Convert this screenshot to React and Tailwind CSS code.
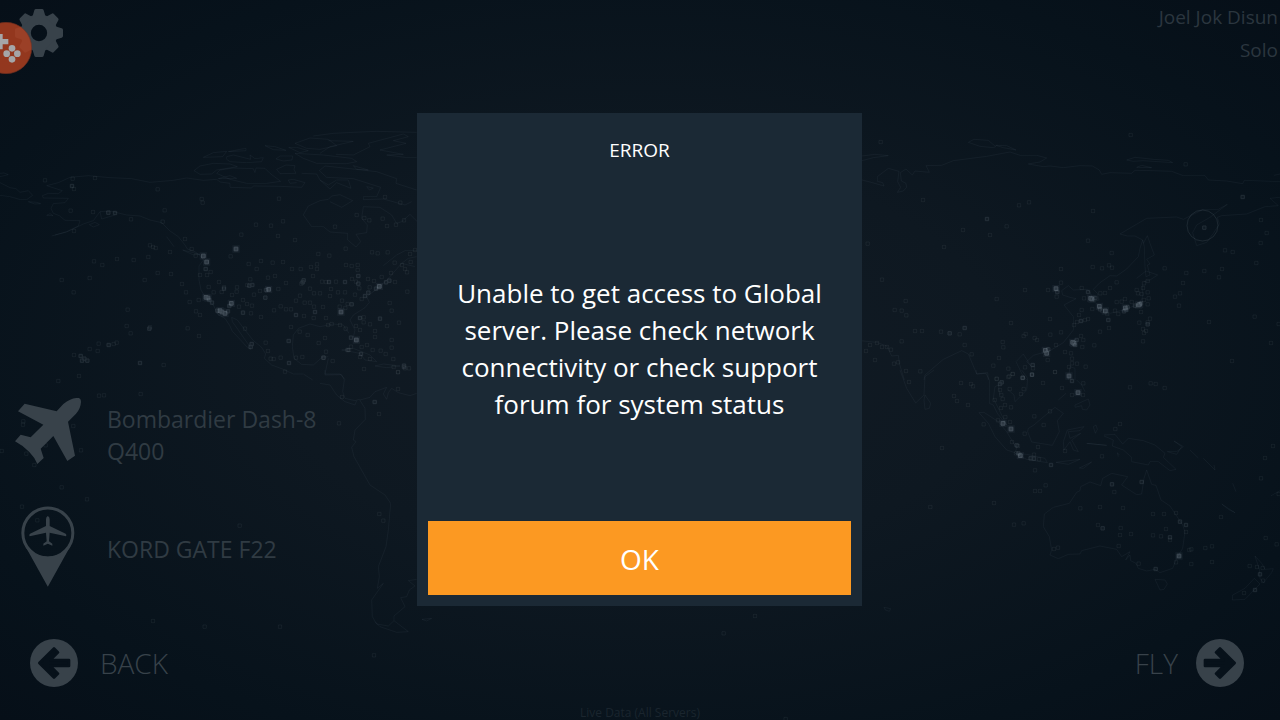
import React from 'react';

// Each region keeps its own origin; coordinates inside are in thirds of a map unit.
const regions = [
  {
    id: 'north-america',
    origin: 'translate(0 100) scale(0.33333)',
    coast: [
      'M0 220 L12 219 25 224 0 230 M0 248 L30 263 48 266 60 277 85 272 98 286 80 299 62 299 30 290 0 286',
      'M85 305 L110 307 122 311 104 312Z',
      'M165 405 L200 395 235 378 240 362 195 361 178 347 160 340 153 325 160 311 195 308 205 295 130 294 127 287 145 280 175 281 187 272 140 257 175 248 210 232 265 227 330 233 395 236 450 247 520 241 560 234 610 241 650 238 660 246 690 250 690 262 755 264 760 258 840 259 905 262 915 248 880 238 865 240 870 250 890 248',
      'M155 408 L200 396 250 372 280 362 300 335 330 333 380 345 420 348 450 360 485 368 510 393 535 410 555 435 562 447 585 455 600 466 M305 357 L300 335 M305 357 L345 345',
      'M500 410 L522 440 M548 450 L600 463 580 465Z M268 374 L285 367 298 374 280 381Z M140 346 L150 341 159 347Z',
      'M600 466 L610 480 597 498 597 540 603 570 615 590 640 615 655 645 675 655 690 678 697 694 720 718 740 740 752 748 750 740 730 712 715 690 697 665 695 652 712 660 735 690 760 722 785 742 797 762 793 775 815 795 850 808 880 822 910 822 938 840',
      'M1068 441 L1043 420 1043 400 990 396 970 380 935 380 910 345 925 318 960 302 985 298 995 288 1020 284 1058 302 1025 322 990 305',
      'M1068 441 L1082 425 1068 403 1100 398 1102 375 1085 355 1090 320 1140 322 1175 345 1190 370 1205 365 1230 343 1252 365',
      'M582 212 L600 198 640 190 690 192 712 200 650 210 635 222 600 223Z M660 210 L700 204 760 206 765 218 768 204 795 205 810 220 842 244 800 250 740 250 690 238 650 220Z M655 236 L690 227 710 235Z',
      'M610 172 L640 158 680 154 668 170Z M680 170 L700 165 752 178 750 165 765 176 790 173 785 185 740 188 690 185 680 178Z M685 155 L720 148 738 145 738 152Z M795 137 L825 140 858 151 820 149Z',
      'M828 177 L840 168 878 168 876 180 850 183Z M830 208 L858 195 885 197 882 208 888 220 840 221Z M866 142 L890 142 925 152 900 158Z M885 160 L970 165 1055 175 1070 185 1040 191 950 190 910 175Z',
      'M940 108 L1000 100 1060 97 1130 94 1250 97 M885 130 L930 114 985 118 1010 137 960 148 920 145Z M960 160 L990 140 1060 124 985 122 M1008 163 L1060 165 1110 140 1105 130 1210 102 1225 110 1180 122 1218 130 1140 150 1210 163 1160 165 1215 172 1250 172',
      'M958 212 L975 198 1050 206 1130 215 1190 236 1188 250 1250 270 M958 212 L980 232 1060 236 1142 262 1130 290 1090 290 1090 299 1150 297 1215 315 1235 305 M905 220 L950 222 960 240 985 255 1010 240 1045 240 1053 265 1010 248 990 267 960 240 M1100 260 L1120 264 1108 270Z M1060 197 L1105 210 1070 208Z',
      'M1250 452 L1215 452 1190 465 1150 497 M1250 470 L1225 475 1205 490 1245 500 M1205 490 L1170 530 1140 560 1100 590 1108 607 1095 623 1060 645 1050 660 1065 690 1060 712 M1047 700 L1030 675 1000 672 960 680 930 672 895 685 880 705 877 740 882 775 905 793 940 795 965 773 985 770 M985 775 L975 822 1020 822 1035 838',
      'M1025 750 L1060 745 1110 765 1130 785 1095 780 1080 760Z M1125 798 L1150 792 1200 798 1160 803Z',
    ],
    faint: [
      135, 241, 218, 236, 222, 267, 285, 234, 473, 268, 212, 332, 279, 336, 393, 358, 222, 393, 494, 331, 488, 365, 605, 297, 608, 308, 837, 296, 849, 364, 768, 374, 813, 377,
      724, 404, 834, 408, 885, 420, 555, 417, 575, 447, 587, 467, 450, 436, 459, 441, 467, 444, 510, 456, 445, 471, 401, 480, 351, 477, 307, 495, 282, 484, 269, 534, 185, 540,
      221, 577, 434, 540, 473, 519, 513, 522, 546, 552, 558, 577, 569, 606, 596, 600, 588, 634, 600, 645, 563, 685, 597, 708, 383, 629, 380, 678, 392, 700, 450, 682, 350, 728,
      341, 732, 296, 731, 293, 753, 269, 747, 222, 765, 491, 795, 237, 828, 1005, 380, 1070, 345, 1093, 354, 1108, 361, 1148, 356, 1161, 378, 1188, 374, 1212, 361, 1155, 291,
      1201, 308, 1037, 446, 955, 462, 988, 467, 1116, 457, 1133, 460, 1163, 457, 692, 469, 746, 492, 783, 483, 818, 488, 849, 486, 770, 507, 804, 533, 825, 528, 600, 525,
      621, 525, 632, 516, 626, 561, 657, 546, 672, 562, 641, 577, 665, 576, 696, 585, 710, 575, 711, 562, 751, 538, 742, 555, 762, 584, 780, 573, 835, 567, 858, 549, 876, 507,
      902, 507, 933, 501, 951, 493, 951, 507, 939, 528, 904, 551, 930, 566, 942, 580, 966, 545, 978, 546, 993, 567, 960, 580, 990, 588, 1008, 545, 1014, 577, 900, 587, 888, 602,
      914, 608, 930, 608, 942, 620, 969, 621, 912, 648, 858, 628, 873, 628, 842, 619, 822, 631, 783, 651, 753, 640, 717, 620, 729, 600, 741, 612, 756, 617, 735, 686, 797, 728,
      804, 753, 812, 776, 821, 777, 842, 773, 855, 815, 888, 773, 907, 771, 873, 681, 899, 695, 923, 705, 941, 654, 978, 654, 1038, 495, 1055, 498, 1073, 495, 1073, 510,
      1056, 537, 1068, 545, 1078, 565, 1104, 537, 1109, 562, 1122, 543, 1145, 531, 1173, 519, 1184, 488, 1206, 495, 1215, 507, 1230, 462, 1245, 450, 1232, 486, 1221, 517,
      1185, 546, 1222, 575, 1169, 609, 1175, 632, 1197, 668, 1161, 678, 1125, 693, 1110, 673, 1091, 652, 1091, 667, 1068, 678, 1080, 690, 1037, 686, 1019, 620, 1036, 624,
      1043, 612, 1085, 597, 1065, 584, 1035, 577, 1026, 602, 1125, 711, 1175, 720, 1175, 743, 1142, 752, 1118, 750, 1101, 735, 1085, 741, 1080, 771, 1110, 777, 1157, 762,
      1180, 777, 1181, 801, 1194, 817, 1215, 805, 1227, 805, 1092, 807, 1053, 740, 1047, 750, 978, 755, 998, 783, 972, 773, 956, 729, 975, 714, 995, 672, 984, 675, 1020, 675,
    ],
    mid: [
      216, 258, 345, 339, 325, 338, 420, 789, 448, 686, 242, 768, 253, 776, 262, 782, 246, 782, 326, 735, 617, 507, 672, 566, 757, 555, 748, 557, 796, 593, 798, 570, 911, 541,
      908, 547, 987, 546, 1035, 546, 1075, 528, 1075, 551, 945, 636, 888, 645, 729, 638, 755, 732, 752, 741, 867, 789, 866, 723, 970, 773, 1043, 750, 1083, 762, 1140, 656,
      1080, 654, 1055, 613, 1128, 566, 1105, 578, 1095, 588, 1158, 547, 1168, 542, 1053, 713, 1212, 797, 1212, 801, 628, 600, 636, 608, 652, 632, 684, 634, 688, 618,
    ],
    bright: [610, 468, 620, 486, 708, 447, 618, 592, 624, 594, 660, 632, 666, 636, 675, 640, 694, 610, 806, 568, 1023, 636, 1138, 559, 1069, 720],
  },
  {
    id: 'asia',
    origin: 'translate(860 100) scale(0.33333)',
    coast: [
      'M6 168 L45 163 85 167 40 173 6 182 M6 240 L30 246 72 258 68 248 52 244 52 230 85 205 117 214 113 245 122 262 112 277 130 273 140 262 138 250 124 243 121 218 138 207 157 225 165 213 208 217 198 197 245 196 280 182 380 169 450 156 480 166 530 166 560 174 540 186 505 192 550 200 570 198 610 203 660 197 697 198 718 210 725 223 750 218 815 220 825 211 880 212 935 214 970 227 1035 227 1045 240 1100 243 1148 251 1153 241 1260 245',
      'M325 127 L342 118 385 121 407 140 400 143 360 139Z M407 136 L440 137 468 150 430 143Z M800 180 L825 172 880 178 925 181 938 188 850 182 820 184Z M830 202 L845 196 875 203Z M1242 226 L1260 222',
      'M1260 292 L1230 295 1255 317 1215 320 1160 342 1085 347 1072 352 1078 372 1060 400 1040 427 1010 437 998 398 1010 375 1050 352 1102 313 1075 328 1030 328 970 358 950 351 860 355 780 402 802 408 825 408 848 420 840 445 835 470 800 507 770 528 750 527 720 548 700 568 712 580 717 600 700 605 690 575 680 568 640 570 625 557 605 572 608 585 630 592 648 596 612 615 640 650 640 690 610 728 570 752 520 766 500 785 512 797 490 762 468 785 485 820 500 840',
      'M848 420 L853 440 855 500 858 530 870 525 862 495 870 492 860 478 883 465 870 430 862 407 850 430 M830 535 L858 513 893 525 870 540 852 545 M848 555 L848 590 838 612 790 630 750 640',
      'M0 722 L50 727 80 738 95 768 115 766 118 790 133 840 M192 840 L195 825 250 778 305 752 325 762 350 822 383 818 385 840 M625 840 L630 800 645 805 645 840',
    ],
    faint: [
      62, 126, 812, 105, 977, 193, 189, 300, 477, 316, 507, 307, 699, 333, 440, 379, 309, 390, 390, 405, 252, 441, 23, 431, 684, 422, 755, 459, 1203, 360, 1220, 399, 1202, 429,
      1095, 451, 1118, 456, 1189, 489, 1086, 507, 1077, 532, 1033, 513, 979, 519, 914, 505, 969, 549, 960, 580, 945, 590, 957, 617, 1047, 666, 1184, 650, 1233, 729, 1116, 783,
      1256, 672, 603, 507, 603, 548, 564, 570, 495, 570, 410, 597, 66, 539, 137, 603, 104, 630, 125, 632, 139, 646, 453, 669, 570, 657, 165, 693, 186, 693, 243, 695, 299, 703,
      314, 735, 335, 763, 417, 774, 400, 797, 428, 726, 430, 742, 491, 708, 497, 702, 524, 714, 531, 720, 571, 704, 603, 697, 642, 675, 651, 666, 657, 645, 665, 630, 675, 660,
      684, 657, 697, 627, 672, 595, 665, 564, 698, 501, 726, 505, 747, 496, 756, 503, 770, 547, 750, 564, 735, 579, 721, 580, 770, 606, 785, 605, 795, 597, 815, 606, 830, 570,
      834, 580, 845, 582, 849, 564, 852, 550, 863, 543, 863, 577, 866, 595, 863, 613, 852, 600, 843, 636, 870, 656, 863, 667, 838, 668, 849, 687, 858, 693, 852, 699, 849, 724,
      747, 684, 720, 695, 703, 736, 667, 741, 670, 720, 663, 708, 590, 590, 588, 735, 563, 780, 585, 816, 636, 776, 636, 790, 627, 801, 651, 791, 677, 800, 633, 760, 615, 756,
      445, 806, 458, 822, 445, 831, 410, 836, 495, 802, 519, 805, 18, 753, 30, 735, 51, 729, 66, 741, 81, 741, 93, 749, 102, 791, 114, 787, 45, 780, 125, 724, 138, 813, 181, 814,
      765, 632, 775, 642, 742, 642, 726, 632,
    ],
    mid: [381, 357, 1148, 291, 1033, 383, 314, 684, 269, 700, 592, 576, 684, 576, 706, 594, 720, 628, 745, 660, 663, 663, 863, 673, 798, 630, 803, 622, 792, 634, 650, 720, 645, 735, 565, 748, 518, 795, 516, 824, 488, 833, 825, 617, 843, 610],
    bright: [588, 566, 692, 595, 696, 597, 718, 619, 736, 633, 796, 624, 836, 615, 839, 613, 638, 727, 642, 730, 556, 751, 560, 760, 627, 828],
  },
  {
    id: 'oceania',
    origin: 'translate(860 370) scale(0.33333)',
    coast: [
      'M120 0 L140 55 167 99 192 75 195 20 222 0 M195 75 L212 100 208 115 195 118 192 90Z M348 0 L350 12 378 10 388 30 388 100 400 105 412 130 440 165 425 135 410 105 400 85 405 50 415 45 420 75 M485 0 L503 25 500 60 465 95 462 75 445 60',
      'M357 128 L372 127 415 155 440 185 470 235 465 248 440 240 405 200 385 160Z M465 250 L500 253 555 265 562 278 500 268Z M588 277 L660 268 625 283Z M658 294 L695 276 670 295Z',
      'M505 175 L522 165 545 145 585 112 610 130 592 152 598 185 577 226 515 216 503 185Z M595 90 L618 70 M645 105 L685 87 690 105 680 120 667 118 665 107 645 112Z M650 30 L665 45 675 65',
      'M612 240 L610 215 622 180 672 170 660 182 625 185 630 205 662 190 635 210 655 245 640 240 630 215Z M700 170 L708 165 712 178 706 190Z M680 220 L740 226 700 222Z',
      'M732 195 L765 193 788 222 805 205 850 212 885 225 915 250 910 262 948 298 930 302 895 275 870 275 865 285 815 275 815 262 790 240 757 228 760 210 732 198 M922 245 L950 245 970 230 942 213 965 230 950 253Z M990 240 L1015 264 M1030 265 L1065 300 1062 285 M1118 340 L1128 365 M1085 402 L1125 428 1105 418Z M1232 378 L1260 362 M775 260 L772 248 778 255',
      'M860 300 L875 343 888 346 903 390 930 408 948 435 968 465 975 485 968 535 950 565 938 595 900 608 885 598 860 603 835 595 828 580 812 572 810 555 797 570 810 545 785 560 770 538 720 528 665 542 660 552 625 553 595 566 570 555 575 540 568 500 550 470 553 432 580 412 628 400 650 367 660 362 662 350 690 336 722 347 728 325 755 310 803 320 785 345 830 374 845 372 852 325Z',
      'M885 628 L915 630 922 642 912 658 900 660Z M1185 558 L1205 580 1215 598 1240 596 1235 608 1210 638 1200 625 1198 598Z M1183 625 L1200 642 1155 688 1117 690 1118 675 1155 655Z M72 712 L92 716 88 724 76 720Z',
    ],
    faint: [
      147, 36, 303, 39, 333, 42, 339, 49, 282, 78, 291, 93, 324, 105, 410, 27, 448, 19, 458, 12, 449, 57, 420, 60, 424, 75, 428, 87, 404, 90, 423, 114, 435, 105, 453, 112,
      483, 72, 491, 57, 549, 39, 606, 54, 636, 75, 669, 75, 570, 124, 523, 139, 551, 165, 494, 191, 436, 141, 414, 151, 450, 156, 371, 163, 246, 234, 456, 216, 474, 228,
      468, 250, 534, 231, 522, 254, 537, 268, 525, 301, 557, 346, 525, 363, 540, 363, 402, 399, 211, 411, 462, 464, 491, 460, 615, 243, 726, 259, 780, 162, 766, 177, 810, 52,
      872, 40, 887, 42, 914, 54, 1239, 228, 1215, 264, 1203, 325, 1083, 441, 1217, 504, 1250, 523, 1056, 529, 1036, 534, 994, 538, 988, 540, 994, 582, 1056, 576, 720, 411,
      661, 415, 789, 414, 763, 366, 879, 432, 912, 432, 948, 429, 918, 477, 903, 499, 879, 496, 930, 510, 978, 486, 813, 492, 780, 495, 782, 474, 714, 465, 776, 528, 836, 581,
      948, 577, 582, 537, 594, 533, 1169, 588, 1191, 591, 1208, 594, 1152, 669, 1209, 632, 1256, 372, 670, 40, 585, 6,
    ],
    mid: [420, 42, 425, 37, 488, 24, 516, 14, 522, 266, 512, 265, 573, 285, 756, 343, 845, 336, 728, 475, 930, 502, 960, 455, 978, 465, 887, 597, 1185, 660, 636, 33, 1200, 613, 470, 226, 475, 250],
    bright: [429, 160, 453, 177, 481, 257, 654, 68, 957, 558],
  },
  {
    id: 'south-america',
    origin: 'translate(320 370) scale(0.33333)',
    coast: [
      'M15 0 L15 15 65 14 73 30 68 65 75 85 105 92 118 88 135 115 136 148 105 180 100 210 108 215 95 232 102 260 150 345 195 375 212 400 205 480 198 530 175 590 178 620 172 655 190 640 155 690 157 740 170 762 205 768 222 752 265 785 230 787 180 770 165 755 M222 752 L222 738 255 710 242 683 260 680 268 660 285 648 265 632 290 628',
      'M0 40 L30 45 50 75 75 95 105 105 110 92 M120 90 L150 82 165 65 200 52 190 72 200 88 205 68 215 55 235 68 270 77 290 70 M306 748 L335 745 320 753Z',
    ],
    faint: [234, 6, 234, 57, 66, 81, 177, 132, 57, 160, 178, 432, 190, 452],
    mid: [164, 96],
    bright: [],
  },
  {
    id: 'pacific',
    origin: 'translate(0 380) scale(0.33333)',
    coast: [],
    faint: [
      175, 3, 297, 47, 312, 46, 422, 42, 5, 213, 70, 124, 69, 134, 220, 138, 243, 211, 79, 221, 103, 255, 137, 196, 185, 322, 261, 358, 66, 380, 112, 421, 719, 437, 459, 723,
      614, 740, 840, 740, 1122, 826, 2265, 708, 2171, 760, 2357, 1017,
    ],
    mid: [],
    bright: [],
  },
];

// Turns a flat x, y list into one path of small squares.
const squares = (points, size) => {
  let d = '';
  for (let i = 0; i < points.length; i += 2) {
    d += `M${points[i] - size / 2} ${points[i + 1] - size / 2}h${size}v${size}h${-size}z`;
  }
  return d;
};

const WorldMap = () => (
  <svg
    className="absolute inset-0 h-full w-full"
    viewBox="0 0 1280 720"
    preserveAspectRatio="xMidYMid slice"
    fill="none"
    stroke="#c8d8e4"
    aria-hidden="true"
  >
    {regions.map((region) => (
      <g key={region.id} transform={region.origin} strokeWidth="3">
        <path d={region.coast.join(' ')} opacity="0.05" />
        <path d={squares(region.faint, 10)} opacity="0.065" />
        <path d={squares(region.mid, 10)} fill="#c8d8e4" fillOpacity="0.3" opacity="0.12" />
        <path d={squares(region.bright, 22)} fill="#c8d8e4" stroke="none" opacity="0.05" />
        <path d={squares(region.bright, 11)} fill="#c8d8e4" fillOpacity="0.6" opacity="0.24" />
      </g>
    ))}
    <circle cx="1202.5" cy="225.5" r="15.5" opacity="0.1" />
  </svg>
);

const GearIcon = () => (
  <svg className="h-12 w-12" viewBox="-72 -72 144 144" fill="currentColor" aria-hidden="true">
    <circle r="40" fill="none" stroke="currentColor" strokeWidth="31" />
    {[0, 45, 90, 135, 180, 225, 270, 315].map((angle) => (
      <path
        key={angle}
        transform={`rotate(${angle})`}
        d="M-20 -48 L-14 -68 Q-13 -72 -9 -72 H9 Q13 -72 14 -68 L20 -48Z"
      />
    ))}
  </svg>
);

const PlaneIcon = () => (
  <svg className="h-[66px] w-[66px]" viewBox="45 54 198 198" fill="currentColor" aria-hidden="true">
    <path d="M170 94 L190 72 Q216 52 236 54 Q243 56 243 66 Q242 86 228 101 L204 125 L225 227 L202 243 L160 168 L122 206 L131 234 L112 252 Q104 232 88 216 Q68 196 45 184 L62 164 L92 172 L130 134 L54 94 L74 71 Z" />
  </svg>
);

const GatePinIcon = () => (
  <svg className="h-[81px] w-[54px]" viewBox="65 377 162 243" fill="currentColor" aria-hidden="true">
    <circle cx="145.5" cy="458" r="75" fill="none" stroke="currentColor" strokeWidth="9" />
    <path d="M76 494 Q102 529 145.5 529 Q189 529 215 494 L145.5 619Z" />
    <path d="M145.5 407 Q151 409 151 417 V437 L199 460 Q203 464 200 468 L151 457 L149 483 L159 490 V496 L145.5 490 L132 496 V490 L142 483 L140 457 L91 468 Q88 464 92 460 L140 437 V417 Q140 409 145.5 407Z" />
  </svg>
);

const ArrowIcon = ({ className = '' }) => (
  <svg className={`h-12 w-12 ${className}`} viewBox="0 0 144 144" aria-hidden="true">
    <circle cx="72" cy="72" r="72" fill="currentColor" />
    <path
      d="M28 72 L72 28 L84 40 L61 63 H117 V81 H61 L84 104 L72 116Z"
      fill="#07111a"
      stroke="#07111a"
      strokeWidth="8"
      strokeLinejoin="round"
    />
  </svg>
);

const GamepadBubble = () => (
  <button type="button" aria-label="Game controls" className="absolute -left-5 top-[22px] h-[52px] w-[52px]">
    <svg viewBox="-60 66 156 156" className="h-full w-full" aria-hidden="true">
      <circle cx="18" cy="144" r="77" fill="#b04020" opacity="0.83" stroke="#7d3220" strokeWidth="2" />
      <g fill="#a5a6a8">
        <path d="M-8 102 H8 V117 H25 V133 H8 V148 H-8 V133 H-25 V117 H-8Z" />
        <circle cx="36" cy="145" r="10" />
        <circle cx="20" cy="161" r="10" />
        <circle cx="52" cy="161" r="10" />
        <circle cx="36" cy="178" r="10" />
      </g>
    </svg>
  </button>
);

const ErrorDialog = () => (
  <div className="absolute inset-0 flex items-center justify-center pr-px pb-px">
    <div
      role="alertdialog"
      aria-labelledby="dialog-title"
      aria-describedby="dialog-message"
      className="w-[445px] max-w-full bg-[#1b2935] p-[11px] text-center text-white"
    >
      <h1 id="dialog-title" className="mt-3 text-[19px] leading-7">ERROR</h1>
      <p id="dialog-message" className="px-4 pt-[111px] pb-[98px] text-[26px] leading-[37px]">
        Unable to get access to Global server. Please check network connectivity or check support forum for system status
      </p>
      <button type="button" className="h-[74px] w-full bg-[#fc9922] pt-0.5 text-[28px]">
        OK
      </button>
    </div>
  </div>
);

export default function App() {
  return (
    <div className="relative flex min-h-screen flex-col overflow-hidden bg-[radial-gradient(ellipse_at_center,#121b24_0%,#0e1821_40%,#07121b_80%,#060f18_100%)] font-['Open_Sans','Noto_Sans',sans-serif] text-[#38424a]">
      <WorldMap />

      <header className="relative flex items-start justify-between">
        <button type="button" aria-label="Settings" className="mt-[9px] ml-[15px]">
          <GearIcon />
        </button>
        <div className="pt-px pr-0.5 text-right text-[19px] leading-[33px] text-[#2b363f]">
          <p>Joel Jok Disun</p>
          <p>Solo</p>
        </div>
      </header>
      <GamepadBubble />

      <main className="relative mt-auto flex flex-col items-start gap-[39px] pl-[15px] text-[23px] leading-8 text-[#303b43]">
        <button type="button" className="flex items-center gap-[26px] text-left">
          <span className="text-[#38424a]">
            <PlaneIcon />
          </span>
          <span className="w-60 pt-2">Bombardier Dash-8 Q400</span>
        </button>
        <button type="button" className="flex items-center gap-[26px] text-left">
          <span className="flex w-[66px] justify-center text-[#38424a]">
            <GatePinIcon />
          </span>
          <span className="pt-1">KORD GATE F22</span>
        </button>
      </main>

      <footer className="relative mt-[52px] grid h-[81px] grid-cols-3 items-start text-[28px] font-light">
        <button type="button" className="flex h-12 items-center gap-[22px] justify-self-start pl-[30px]">
          <ArrowIcon />
          BACK
        </button>
        <p className="self-end text-center text-[12px] leading-[14px] font-normal text-[#1a252e]">
          Live Data (All Servers)
        </p>
        <button type="button" className="flex h-12 items-center gap-[18px] justify-self-end pr-9">
          FLY
          <ArrowIcon className="rotate-180" />
        </button>
      </footer>

      <ErrorDialog />
    </div>
  );
}
